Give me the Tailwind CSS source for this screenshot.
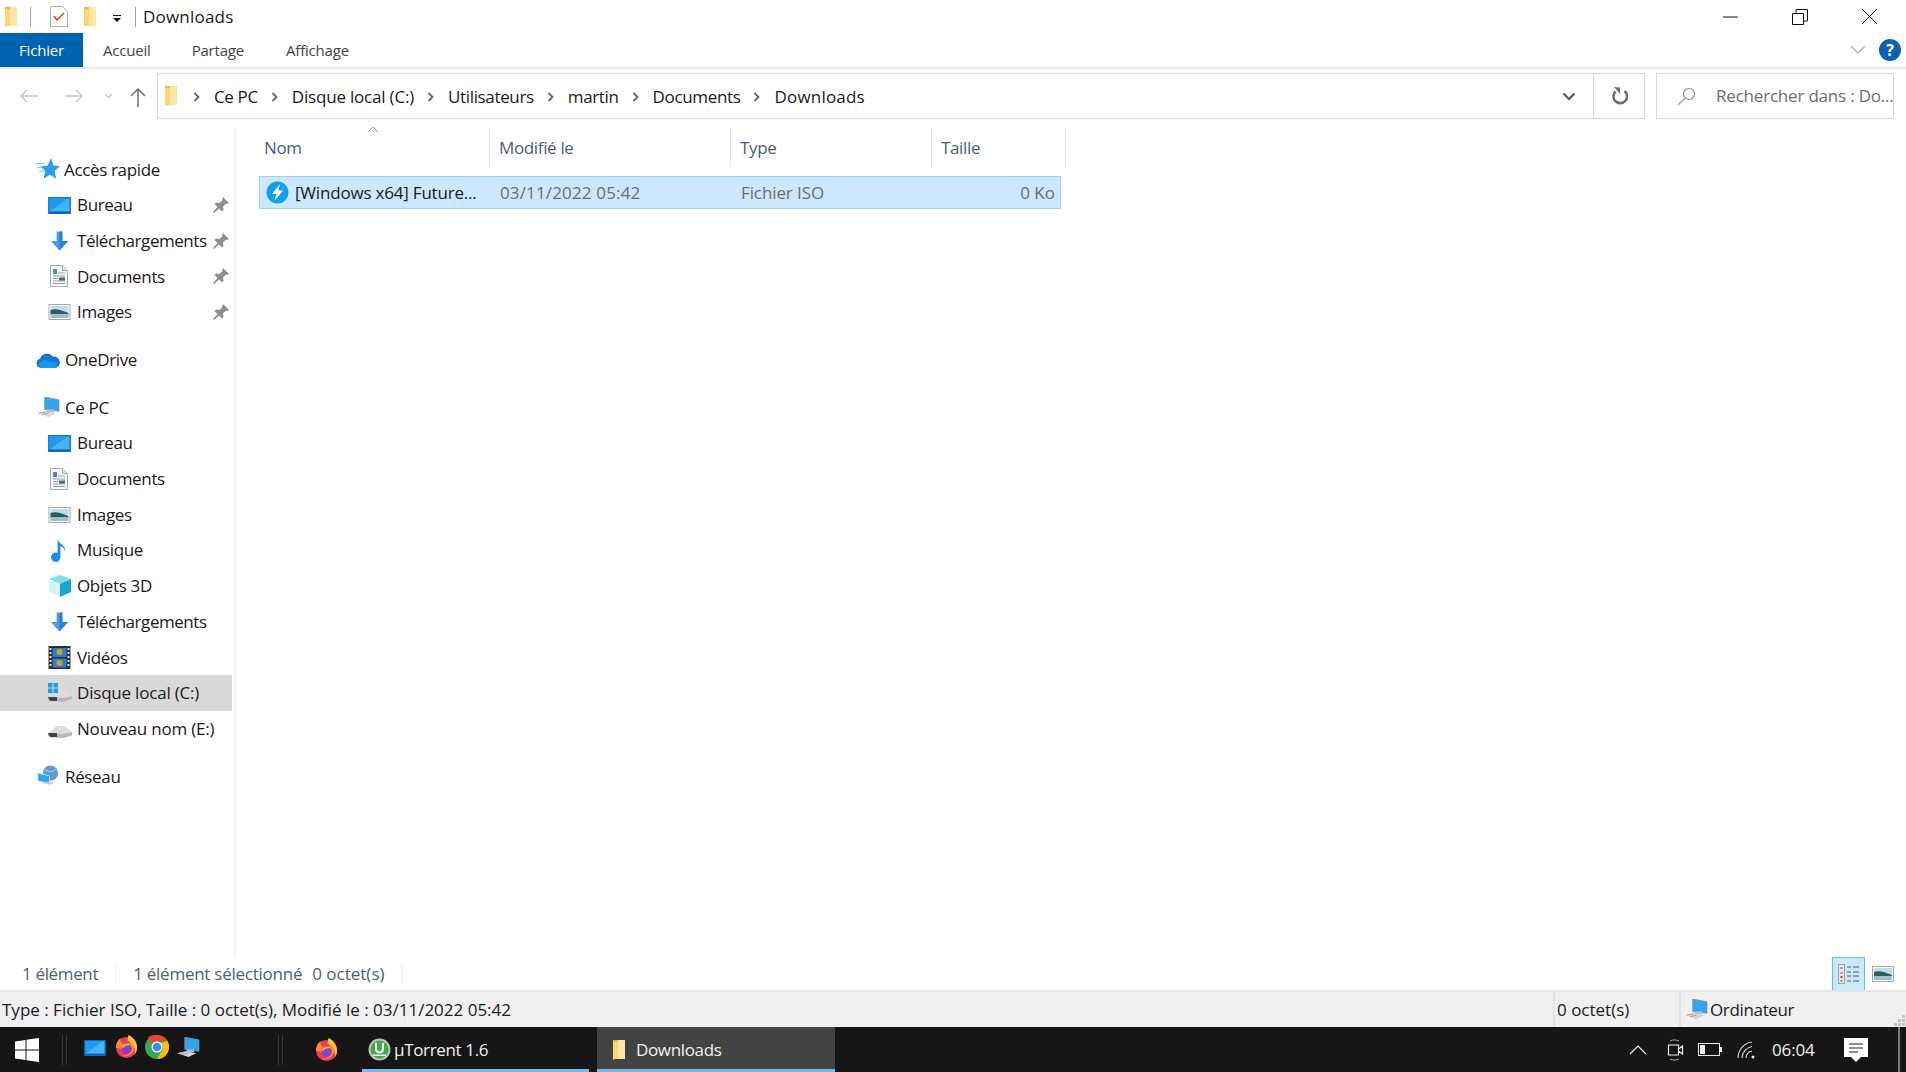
<!DOCTYPE html>
<html lang="fr">
<head>
  <meta charset="UTF-8" />
  <title>Downloads</title>
  <script src="https://cdn.jsdelivr.net/npm/@tailwindcss/browser@4"></script>
</head>
<body class="bg-white text-[#1a1a1a] font-['Open_Sans','Noto_Sans',sans-serif] text-[17px] tracking-[-0.35px] overflow-hidden">
  <!-- icones reutilisees -->
  <svg class="hidden">
    <symbol id="folder" viewBox="0 0 14 22"><path d="M1 1h12v19H3l-2 1z" fill="#f8d775"/><path d="M6 1h7v19H6z" fill="#fbe7a1"/><path d="M1 1h5v2H1z" fill="#e8b94a"/></symbol>
    <symbol id="desktop" viewBox="0 0 24 18"><rect x="0.5" y="0.5" width="23" height="17" fill="#1e9af0" stroke="#0f6fc0"/><path d="M2 15 20 2h2v13z" fill="#45b4f6"/><path d="M1 15.500h22V17H1z" fill="#0b5fa8"/></symbol>
    <symbol id="down" viewBox="0 0 20 20"><path d="M7 0h6v10h6l-9 10-9-10h6z" fill="#4a9ae8"/><path d="M10 0h3v10h6l-9 10z" fill="#2f7fd2"/></symbol>
    <symbol id="doc" viewBox="0 0 18 22"><path d="M.5.5h12l5 5v16H.5z" fill="#fafafa" stroke="#a8a8a8"/><path d="M12.500.5v5h5" fill="#e8e8e8" stroke="#a8a8a8"/><path d="M3 4h4v5H3z" fill="#3d8fe0"/><path d="M8 8h7M3 11h12M3 13.500h5M3 16h12M3 18.500h12" stroke="#8a9aaa"/><path d="M9 12.500h6v3H9z" fill="#3a6f8f"/></symbol>
    <symbol id="image" viewBox="0 0 22 16"><rect x=".5" y=".5" width="21" height="15" fill="#fff" stroke="#a9a9a9"/><path d="M2 2h18v7H2z" fill="#bcdcf2"/><path d="M2 6c5-2 10 0 18 3v2H2z" fill="#2f5f58"/><path d="M2 10h18v4H2z" fill="#9cc0d0"/></symbol>
    <symbol id="pin" viewBox="0 0 16 16"><path d="M10 0l6 6-2 1-1-.5-3 3 .5 3.500-1.500 1.500-3-3L1 16l-1-1 4.500-5-3-3L3 5.500l3.500.5 3-3L9 2z" fill="#8f8f8f"/></symbol>
    <symbol id="star" viewBox="0 0 22 20"><path d="M14 0l1.800 6.500L22 7.500l-5 4.300L18.500 19l-5.700-3.800L7 19l1.500-7.200L4 7.500l6.400-.5z" fill="#2f9bef"/><path d="M0 5h8M1 8.500h5M3 12h5" stroke="#8cc8f4" stroke-width="1.200"/></symbol>
    <symbol id="cloud" viewBox="0 0 25 17"><path d="M5 17a5 5 0 0 1-1-9.800A8 8 0 0 1 18 5a6 6 0 0 1 2 12z" fill="#0f78d4"/><path d="M5 17a4 4 0 0 1 0-7l5-2 5 3 5 0a3.200 3.200 0 0 1 0 6z" fill="#1a96e8"/></symbol>
    <symbol id="pc" viewBox="0 0 24 22"><path d="M8 0l15 3v12L8 13z" fill="#34a4f0" stroke="#7a8a98" stroke-width=".7"/><path d="M10 13h8v3h-8z" fill="#b4bcc4"/><path d="M0 17l9-2 11 2-8 4z" fill="#d2d6da"/><path d="M2 17l7-1.500M5 18.500l7-1.500" stroke="#a4a8ac"/></symbol>
    <symbol id="music" viewBox="0 0 18 24"><path d="M7 0c1 5 9 6 8 13-.5-3-3-5-5-5.500V19a5 5 0 1 1-3-4.500z" fill="#1d8fe0"/></symbol>
    <symbol id="cube" viewBox="0 0 22 22"><path d="M11 0l11 4-11 5L0 4z" fill="#7fe0e6"/><path d="M0 4l11 5v13L0 17z" fill="#d6f4f6"/><path d="M22 4 11 9v13l11-5z" fill="#17a8c4"/></symbol>
    <symbol id="film" viewBox="0 0 22 23"><path d="M0 0h22v23H0z" fill="#2e2e2e"/><path d="M4 2h14v9H4z" fill="#2a7fd8"/><path d="M4 12.500h14v9H4z" fill="#2a7fd8"/><circle cx="11" cy="6" r="3" fill="#d8a020"/><circle cx="11" cy="17" r="3" fill="#d8a020"/><path d="M1 2h2v2H1zM1 6h2v2H1zM1 10h2v2H1zM1 14h2v2H1zM1 18h2v2H1zM19 2h2v2h-2zM19 6h2v2h-2zM19 10h2v2h-2zM19 14h2v2h-2zM19 18h2v2h-2z" fill="#ddd"/></symbol>
    <symbol id="drive" viewBox="0 0 24 13"><path d="M0 8l9-7h7l8 6v4l-9 2H3z" fill="#dcdcdc"/><path d="M0 8l15 1 9-2v3l-9 3-15-2z" fill="#b8b8b8"/><path d="M0 8h9v4H2z" fill="#444"/></symbol>
    <symbol id="network" viewBox="0 0 24 22"><circle cx="14" cy="8" r="8" fill="#5a9fd0"/><path d="M8 4c4 3 8 3 12 0" stroke="#bcdcf2" fill="none"/><path d="M1 8l12 3v8L1 16z" fill="#2aa4f0" stroke="#d0d8de"/><path d="M3 18l10 2 6-2-8-1z" fill="#c8ccd0"/></symbol>
    <symbol id="firefox" viewBox="0 0 24 24"><circle cx="12" cy="13" r="11" fill="#f0385a"/><path d="M14 0c5 2 9 7 9 13 0 3-1 5-2 7 1-7-3-12-8-14z" fill="#ffc42a"/><path d="M1 13C1 8 3 5 6 3c-1 3 0 5 2 6l9-1c3 2 4 6 2 9-2 4-8 7-13 4 4 1 8 0 9-3z" fill="#ff8a2b"/><circle cx="12" cy="14" r="5.500" fill="#7e43c8"/><path d="M7 12c2-3 7-4 10-1-3-1-7 0-9 3z" fill="#ffb030"/></symbol>
    <symbol id="chrome" viewBox="0 0 24 24"><circle cx="12" cy="12" r="12" fill="#34a853"/><path d="M12 0a12 12 0 0 1 10.400 6H12a6 6 0 0 0-5.200 3L3 2.700A12 12 0 0 1 12 0z" fill="#ea4335"/><path d="M22.400 6A12 12 0 0 1 12 24l5.200-9A6 6 0 0 0 16 8z" fill="#fbbc05"/><circle cx="12" cy="12" r="5.500" fill="#fff"/><circle cx="12" cy="12" r="4.300" fill="#4285f4"/></symbol>
  </svg>

  <div class="w-[1906px] h-[1072px] flex flex-col">
    <!-- barre de titre -->
    <div class="h-[33px] flex items-center relative">
      <svg class="w-[14px] h-[22px] ml-[4px]"><use href="#folder"/></svg>
      <div class="w-px h-5 bg-[#a0a0a0] ml-[12px]"></div>
      <svg class="w-[18px] h-[21px] ml-[19px]" viewBox="0 0 18 21"><path d="M.5.5h12l5 5v15H.5z" fill="#fff" stroke="#b0b0b0"/><path d="M4 10l3 4 7-7" fill="none" stroke="#e8481c" stroke-width="1.600"/></svg>
      <svg class="w-[14px] h-[22px] ml-[15px]"><use href="#folder"/></svg>
      <svg class="w-[10px] h-[9px] ml-[15px] mt-1" viewBox="0 0 10 9"><path d="M1 1h8v1H1zM1 4h8L5 8z" fill="#111"/></svg>
      <div class="w-px h-5 bg-[#a0a0a0] ml-[13px]"></div>
      <span class="ml-[7px] tracking-[0.2px]">Downloads</span>
      <div class="ml-auto flex items-center">
        <svg class="w-[16px] h-[16px]" viewBox="0 0 16 16"><path d="M0 8h15" stroke="#111"/></svg>
        <svg class="w-[16px] h-[16px] ml-[53px]" viewBox="0 0 16 16"><path d="M.5 4.500h11v11H.5zM4 4V.5h11.500V12H12" fill="none" stroke="#111"/></svg>
        <svg class="w-[17px] h-[17px] ml-[53px] mr-[28px]" viewBox="0 0 17 17"><path d="M1 1l15 15M16 1 1 16" stroke="#111"/></svg>
      </div>
    </div>

    <!-- onglets du ruban -->
    <div class="h-[36px] flex items-start border-b-2 border-[#ececec] text-[15px] tracking-[-0.2px] text-[#444]">
      <div class="w-[83px] h-[34px] bg-[#0063b1] text-white flex items-center justify-center">Fichier</div>
      <span class="ml-[20px] h-[34px] flex items-center">Accueil</span>
      <span class="ml-[41px] h-[34px] flex items-center">Partage</span>
      <span class="ml-[42px] h-[34px] flex items-center">Affichage</span>
      <svg class="w-[16px] h-[34px] ml-auto" viewBox="0 0 16 34"><path d="M1 13l7 7 7-7" fill="none" stroke="#b4b4b4" stroke-width="1.300"/></svg>
      <div class="w-[22px] h-[22px] rounded-full bg-[#0a62b8] text-white font-bold text-[16px] flex items-center justify-center ml-[13px] mr-[5px] mt-[6px]">?</div>
    </div>

    <!-- barre d'adresse -->
    <div class="h-[50px] pt-[4px] flex items-start">
      <div class="w-[157px] h-[46px] flex items-center">
        <svg class="w-[20px] h-[16px] ml-[19px]" viewBox="0 0 20 16"><path d="M19 8H2M8 2 2 8l6 6" fill="none" stroke="#c8c8c8" stroke-width="1.500"/></svg>
        <svg class="w-[20px] h-[16px] ml-[25px]" viewBox="0 0 20 16"><path d="M1 8h17M12 2l6 6-6 6" fill="none" stroke="#c8c8c8" stroke-width="1.500"/></svg>
        <svg class="w-[9px] h-[6px] ml-[20px]" viewBox="0 0 9 6"><path d="M1 1l3.500 3.500L8 1" fill="none" stroke="#c8c8c8" stroke-width="1.300"/></svg>
        <svg class="w-[16px] h-[20px] ml-[17px] mt-[2px]" viewBox="0 0 16 20"><path d="M8 20V2M1 9l7-7 7 7" fill="none" stroke="#707070" stroke-width="1.500"/></svg>
      </div>
      <div class="w-[1488px] h-[46px] border border-[#d9d9d9] flex items-center">
        <svg class="w-[14px] h-[22px] ml-[6px]"><use href="#folder"/></svg>
        <div class="flex items-center gap-[13px] ml-[15px] pt-[1px]">
          <svg class="w-[8px] h-[10px]" viewBox="0 0 8 10"><path d="M1.500 1l4 4-4 4" fill="none" stroke="#666" stroke-width="1.800"/></svg>
          <span>Ce PC</span>
          <svg class="w-[8px] h-[10px]" viewBox="0 0 8 10"><path d="M1.500 1l4 4-4 4" fill="none" stroke="#666" stroke-width="1.800"/></svg>
          <span class="tracking-[-0.2px]">Disque local (C:)</span>
          <svg class="w-[8px] h-[10px]" viewBox="0 0 8 10"><path d="M1.500 1l4 4-4 4" fill="none" stroke="#666" stroke-width="1.800"/></svg>
          <span>Utilisateurs</span>
          <svg class="w-[8px] h-[10px]" viewBox="0 0 8 10"><path d="M1.500 1l4 4-4 4" fill="none" stroke="#666" stroke-width="1.800"/></svg>
          <span>martin</span>
          <svg class="w-[8px] h-[10px]" viewBox="0 0 8 10"><path d="M1.500 1l4 4-4 4" fill="none" stroke="#666" stroke-width="1.800"/></svg>
          <span>Documents</span>
          <svg class="w-[8px] h-[10px]" viewBox="0 0 8 10"><path d="M1.500 1l4 4-4 4" fill="none" stroke="#666" stroke-width="1.800"/></svg>
          <span class="tracking-[0.2px]">Downloads</span>
        </div>
        <svg class="w-[14px] h-[9px] ml-auto mr-[17px]" viewBox="0 0 14 9"><path d="M1.500 1.500 7 7l5.500-5.500" fill="none" stroke="#555" stroke-width="2"/></svg>
        <div class="w-[51px] h-[44px] border-l border-[#d9d9d9] flex items-center justify-center">
          <svg class="w-[17px] h-[18px]" viewBox="0 0 17 18"><path d="M4.500 4.500a6.800 6.800 0 1 0 9-.5" fill="none" stroke="#6e6e6e" stroke-width="2.600"/><path d="M3 0l6 .5v6.500z" fill="#6e6e6e"/></svg>
        </div>
      </div>
      <div class="w-[238px] h-[46px] ml-[11px] border border-[#d9d9d9] flex items-center text-[#6d6d6d] tracking-[-0.2px]">
        <svg class="w-[19px] h-[19px] ml-[20px] shrink-0" viewBox="0 0 19 19"><circle cx="12" cy="7" r="5.500" fill="none" stroke="#888" stroke-width="1.200"/><path d="M8 11 1 18" stroke="#c89878" stroke-width="1.500"/></svg>
        <span class="ml-[20px] whitespace-nowrap">Rechercher dans : Do...</span>
      </div>
    </div>

    <!-- corps -->
    <div class="h-[837px] flex pt-[8px]">
      <nav class="w-[236px] h-[829px] border-r-2 border-[#f2f2f2] pt-[24.5px] flex flex-col">
        <div class="h-[35.7px] flex items-center pl-[37px]"><svg class="w-[24px] h-[22px] -ml-[1px]"><use href="#star"/></svg><span class="ml-[4px]">Accès rapide</span></div>
        <div class="h-[35.7px] flex items-center pl-[48px] pr-[5px]"><svg class="w-[23px] h-[17px]"><use href="#desktop"/></svg><span class="ml-[6px]">Bureau</span><svg class="w-[16px] h-[16px] ml-auto"><use href="#pin"/></svg></div>
        <div class="h-[35.7px] flex items-center pl-[50px] pr-[5px]"><svg class="w-[19px] h-[20px] shrink-0"><use href="#down"/></svg><span class="ml-[8px] whitespace-nowrap tracking-[-0.45px]">Téléchargements</span><svg class="w-[16px] h-[16px] ml-auto shrink-0"><use href="#pin"/></svg></div>
        <div class="h-[35.7px] flex items-center pl-[50px] pr-[5px]"><svg class="w-[18px] h-[22px]"><use href="#doc"/></svg><span class="ml-[9px]">Documents</span><svg class="w-[16px] h-[16px] ml-auto"><use href="#pin"/></svg></div>
        <div class="h-[35.7px] flex items-center pl-[48px] pr-[5px]"><svg class="w-[23px] h-[16px]"><use href="#image"/></svg><span class="ml-[6px]">Images</span><svg class="w-[16px] h-[16px] ml-auto"><use href="#pin"/></svg></div>

        <div class="h-[35.7px] flex items-center pl-[36px] mt-[12px]"><svg class="w-[24px] h-[16px]"><use href="#cloud"/></svg><span class="ml-[5px]">OneDrive</span></div>

        <div class="h-[35.7px] flex items-center pl-[37px] mt-[12px]"><svg class="w-[23px] h-[21px]"><use href="#pc"/></svg><span class="ml-[5px]">Ce PC</span></div>
        <div class="h-[35.7px] flex items-center pl-[48px]"><svg class="w-[23px] h-[17px]"><use href="#desktop"/></svg><span class="ml-[6px]">Bureau</span></div>
        <div class="h-[35.7px] flex items-center pl-[50px]"><svg class="w-[18px] h-[22px]"><use href="#doc"/></svg><span class="ml-[9px]">Documents</span></div>
        <div class="h-[35.7px] flex items-center pl-[48px]"><svg class="w-[23px] h-[16px]"><use href="#image"/></svg><span class="ml-[6px]">Images</span></div>
        <div class="h-[35.7px] flex items-center pl-[51px]"><svg class="w-[17px] h-[23px]"><use href="#music"/></svg><span class="ml-[9px]">Musique</span></div>
        <div class="h-[35.7px] flex items-center pl-[49px]"><svg class="w-[22px] h-[22px]"><use href="#cube"/></svg><span class="ml-[6px]">Objets 3D</span></div>
        <div class="h-[35.7px] flex items-center pl-[50px]"><svg class="w-[19px] h-[20px]"><use href="#down"/></svg><span class="ml-[8px] whitespace-nowrap tracking-[-0.45px]">Téléchargements</span></div>
        <div class="h-[35.7px] flex items-center pl-[48px]"><svg class="w-[23px] h-[23px]"><use href="#film"/></svg><span class="ml-[6px]">Vidéos</span></div>
        <div class="h-[35.7px] w-[232px] flex items-center pl-[48px] bg-[#d9d9d9] relative">
          <svg class="w-[24px] h-[13px] mt-[6px]"><use href="#drive"/></svg>
          <svg class="absolute left-[48px] top-[8px] w-[10px] h-[10px]" viewBox="0 0 10 10"><path d="M0 0h4.500v4.500H0zM5.500 0H10v4.500H5.500zM0 5.500h4.500V10H0zM5.500 5.500H10V10H5.500z" fill="#18a0f0"/></svg>
          <span class="ml-[5px] tracking-[-0.2px]">Disque local (C:)</span>
        </div>
        <div class="h-[35.7px] flex items-center pl-[48px]"><svg class="w-[24px] h-[13px] mt-[6px]"><use href="#drive"/></svg><span class="ml-[5px] whitespace-nowrap tracking-[-0.2px]">Nouveau nom (E:)</span></div>

        <div class="h-[35.7px] flex items-center pl-[37px] mt-[12px]"><svg class="w-[23px] h-[22px]"><use href="#network"/></svg><span class="ml-[5px]">Réseau</span></div>
      </nav>

      <section class="flex-1 flex flex-col">
        <div class="h-[40px] pt-[1px] flex text-[#4c607a] relative">
          <svg class="absolute left-[131px] -top-[1px] w-[12px] h-[7px]" viewBox="0 0 12 7"><path d="M1 6l5-5 5 5" fill="none" stroke="#a0a0a0"/></svg>
          <div class="w-[254px] pl-[28px] flex items-center border-r border-[#e5e5e5]">Nom</div>
          <div class="w-[241px] pl-[9px] flex items-center border-r border-[#e5e5e5]">Modifié le</div>
          <div class="w-[201px] pl-[9px] flex items-center border-r border-[#e5e5e5]">Type</div>
          <div class="w-[134px] pl-[9px] flex items-center border-r border-[#e5e5e5]">Taille</div>
        </div>
        <div class="mt-[9px] ml-[23px] w-[802px] h-[33px] pt-[1px] bg-[#cce8ff] border border-[#99d1ff] flex items-center whitespace-nowrap">
          <div class="w-[240px] flex items-center pl-[6px]">
            <svg class="w-[23px] h-[23px] shrink-0 -mt-[2px]" viewBox="0 0 23 23"><circle cx="11.500" cy="11.500" r="11" fill="#12a0e6"/><path d="M14 3 6 13h4.500L8.500 20l8.500-10.500h-4.500z" fill="#fff"/></svg>
            <span class="ml-[6px] tracking-[-0.2px]">[Windows x64] Future...</span>
          </div>
          <span class="w-[241px] text-[#6d6d6d] tracking-[0.15px]">03/11/2022 05:42</span>
          <span class="w-[201px] text-[#6d6d6d] tracking-[-0.1px]">Fichier ISO</span>
          <span class="w-[118px] text-right pr-[5px] text-[#6d6d6d] tracking-[0px]">0 Ko</span>
        </div>
      </section>
    </div>

    <!-- barre d'etat de l'explorateur -->
    <div class="h-[34px] pt-[1px] flex items-center text-[#4c607a] relative">
      <span class="ml-[22px]">1 élément</span>
      <div class="w-px h-[18px] bg-[#efefef] ml-[17px]"></div>
      <span class="ml-[17px] tracking-[-0.25px]">1 élément sélectionné</span>
      <span class="ml-[10px] tracking-normal">0 octet(s)</span>
      <div class="w-px h-[18px] bg-[#efefef] ml-[16px]"></div>
      <div class="ml-auto w-[33px] h-[34px] bg-[#cce8ff] border border-[#66bbf0] flex items-center justify-center">
        <svg class="w-[22px] h-[20px]" viewBox="0 0 22 20"><rect x=".5" y=".5" width="6" height="19" fill="#e8e8e8" stroke="#a0a0a0"/><path d="M2.500 3h2v2h-2z" fill="#5a8ab0"/><path d="M2.500 8h2v2h-2z" fill="#c89020"/><path d="M2.500 12h2v2h-2z" fill="#c83020"/><path d="M2.500 16h2v2h-2z" fill="#70a070"/><path d="M9 3h4M15 3h6M9 8h4M15 8h6M9 12h4M15 12h6M9 17h4M15 17h6" stroke="#7a8a98" stroke-width="1.300"/></svg>
      </div>
      <svg class="w-[22px] h-[16px] ml-[7px] mr-[12px]"><use href="#image"/></svg>
    </div>

    <!-- barre d'infos -->
    <div class="h-[37px] bg-[#f0f0f0] border-t-2 border-[#e4e4e4] flex items-center whitespace-nowrap tracking-normal relative">
      <span class="ml-[2px]">Type : Fichier ISO, Taille : 0 octet(s), Modifié le : 03/11/2022 05:42</span>
      <div class="ml-auto w-[126px] h-full border-l-2 border-[#e2e2e2] flex items-center"><span class="ml-[2px]">0 octet(s)</span></div>
      <div class="w-[227px] h-full border-l-2 border-[#e2e2e2] flex items-center pl-[4px] tracking-[-0.35px]"><svg class="w-[23px] h-[21px]"><use href="#pc"/></svg><span class="ml-[2px]">Ordinateur</span></div>
      <svg class="absolute right-[1px] bottom-[1px] w-[11px] h-[11px]" viewBox="0 0 11 11"><path d="M8 0h3v3H8zM4 4h3v3H4zM8 4h3v3H8zM0 8h3v3H0zM4 8h3v3H4zM8 8h3v3H8z" fill="#c4c4c4"/></svg>
    </div>

    <!-- barre des taches -->
    <div class="h-[45px] bg-[#161616] flex items-center text-[#f2f2f2] relative">
      <svg class="w-[24px] h-[24px] ml-[15px]" viewBox="0 0 24 24"><path d="M0 3.500 10.500 2v9.500H0zM11.500 1.800 24 0v11.500H11.500zM0 12.500h10.500V22L0 20.500zM11.500 12.500H24V24l-12.500-1.800z" fill="#fff"/></svg>
      <div class="w-[5px] h-[30px] ml-[23px] border-x border-[#3a3a3a]"></div>
      <svg class="w-[22px] h-[16px] ml-[17px] -mt-[4px]"><use href="#desktop"/></svg>
      <svg class="w-[23px] h-[23px] ml-[9px] -mt-[6px]"><use href="#firefox"/></svg>
      <svg class="w-[24px] h-[24px] ml-[7px] -mt-[6px]"><use href="#chrome"/></svg>
      <svg class="w-[23px] h-[21px] ml-[8px] -mt-[5px]"><use href="#pc"/></svg>
      <div class="w-[5px] h-[30px] ml-[78px] border-x border-[#3a3a3a]"></div>
      <svg class="w-[23px] h-[23px] ml-[32px]"><use href="#firefox"/></svg>
      <div class="w-[227px] h-[45px] ml-[24px] border-b-[3px] border-[#76b9ed] flex items-center pl-[6px] pt-[3px]">
        <svg class="w-[23px] h-[23px]" viewBox="0 0 23 23"><circle cx="11.500" cy="11.500" r="11" fill="#b8c4b8"/><circle cx="11.500" cy="11.500" r="9" fill="#45a845"/><path d="M7 5v6a4.500 4.500 0 0 0 9 0V5h-2v6a2.500 2.500 0 0 1-5 0V5z" fill="#fff"/><path d="M5 16.500h13V18H5z" fill="#fff"/></svg>
        <span class="ml-[3px]">µTorrent 1.6</span>
      </div>
      <div class="w-[238px] h-[45px] ml-[8px] bg-[#434343] border-b-[3px] border-[#76b9ed] flex items-center pl-[15px] pt-[3px]">
        <svg class="w-[14px] h-[22px]"><use href="#folder"/></svg>
        <span class="ml-[10px]">Downloads</span>
      </div>
      <svg class="w-[18px] h-[10px] ml-[794px]" viewBox="0 0 18 10"><path d="M1 9l8-8 8 8" fill="none" stroke="#eee" stroke-width="1.200"/></svg>
      <svg class="w-[17px] h-[22px] ml-[20px]" viewBox="0 0 17 22"><path d="M1.500 6h10v10h-10zM11.500 10l4-3v8l-4-3z" fill="none" stroke="#eee" stroke-width="1.200"/><path d="M3 2c3-1.500 6-1.500 9 0M3 20c3 1.500 6 1.500 9 0" fill="none" stroke="#aaa"/></svg>
      <svg class="w-[24px] h-[13px] ml-[14px]" viewBox="0 0 24 13"><rect x=".5" y=".5" width="21" height="12" fill="none" stroke="#eee"/><path d="M2 2h5v9H2z" fill="#eee"/><path d="M22 4h2v5h-2z" fill="#eee"/></svg>
      <svg class="w-[19px] h-[19px] ml-[15px]" viewBox="0 0 19 19"><path d="M1 18A16 16 0 0 1 15 2M5 18A12 12 0 0 1 15 6.500M9 18a7 7 0 0 1 6-7" fill="none" stroke="#ccc" stroke-width="1.200"/><circle cx="16" cy="17" r="1.500" fill="#eee"/></svg>
      <span class="ml-[16px] tracking-[-0.15px]">06:04</span>
      <svg class="w-[24px] h-[24px] ml-[29px]" viewBox="0 0 24 24"><path d="M0 0h24v19h-7l-5 5-5-5H0z" fill="#fff"/><path d="M5 6h14M5 10h14M5 14h9" stroke="#222" stroke-width="1.200"/></svg>
      <div class="absolute right-[6px] top-0 w-[2px] h-[45px] bg-[#7a7a7a]"></div>
    </div>
  </div>
</body>
</html>
